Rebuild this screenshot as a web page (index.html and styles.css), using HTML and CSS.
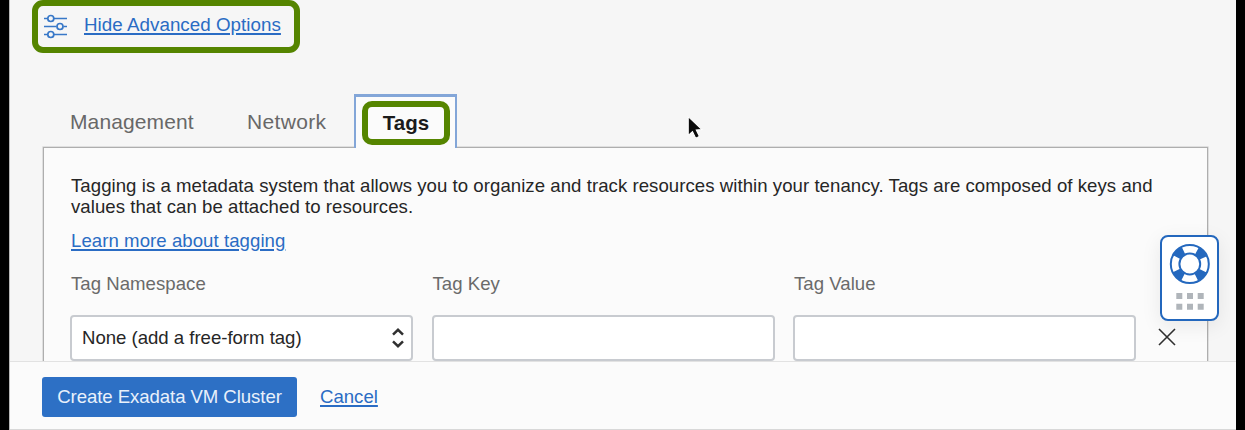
FILE: index.html
```html
<!DOCTYPE html>
<html lang="en">
<head>
<meta charset="utf-8">
<title>Create Exadata VM Cluster</title>
<link rel="stylesheet" href="styles.css">
</head>
<body>
<div class="window">
  <main class="content">
    <div class="advanced">
      <svg class="sliders" width="24" height="26" viewBox="0 0 24 26" fill="none" stroke="#3878c8" stroke-width="1.7">
        <path d="M0 5.5h3.6M10 5.5h13M0 13.5h12.5M19.5 13.5h3.5M0 21.5h3.6M10 21.5h13"/>
        <circle cx="6.8" cy="5.5" r="3"/><circle cx="16" cy="13.5" r="3"/><circle cx="6.8" cy="21.5" r="3"/>
      </svg>
      <a class="link advanced-link" href="#">Hide Advanced Options</a>
    </div>
    <nav class="tabs">
      <span class="tab management">Management</span>
      <span class="tab network">Network</span>
      <div class="tab-active"><span class="tab-mark">Tags</span></div>
    </nav>
    <section class="panel">
      <p class="intro"><span class="line line-one">Tagging is a metadata system that allows you to organize and track resources within your tenancy. Tags are composed of keys and</span> <span class="line line-two">values that can be attached to resources.</span></p>
      <a class="link learn" href="#">Learn more about tagging</a>
      <div class="fields">
        <div class="field">
          <span class="label label-ns">Tag Namespace</span>
          <div class="control"><span class="value">None (add a free-form tag)</span>
            <svg width="14" height="22" viewBox="0 0 14 22" fill="none" stroke="#303030" stroke-width="2.5"><path d="M2 7.6l5-4.8 5 4.8M2 14.4l5 4.8 5-4.8"/></svg>
          </div>
        </div>
        <div class="field"><span class="label">Tag Key</span><div class="control"></div></div>
        <div class="field"><span class="label">Tag Value</span><div class="control"></div></div>
        <svg class="remove" width="18" height="18" viewBox="0 0 18 18" fill="none" stroke="#303030" stroke-width="1.6"><path d="M1 1l16 16M17 1L1 17"/></svg>
      </div>
    </section>
  </main>
  <footer class="footer">
    <div class="primary"><span>Create Exadata VM Cluster</span></div>
    <a class="link cancel" href="#">Cancel</a>
  </footer>
</div>
<div class="help">
  <svg width="55" height="82" viewBox="0 0 55 82">
    <g fill="none" stroke="#2468be">
      <circle cx="27.8" cy="27" r="14.8" stroke-width="8" stroke-dasharray="9.4 13.85" stroke-dashoffset="-6.92"/>
      <circle cx="27.8" cy="27" r="19" stroke-width="2"/><circle cx="27.8" cy="27" r="10.4" stroke-width="2"/>
    </g>
    <path fill="#b0b5ba" d="M14.3 56h6v6h-6zM25 56h6v6h-6zM35.7 56h6v6h-6zM14.3 66.7h6v6h-6zM25 66.7h6v6h-6zM35.7 66.7h6v6h-6z"/>
  </svg>
</div>
<svg class="cursor" width="21" height="29" viewBox="0 0 20 28"><path fill="#0b0b0b" stroke="#fff" stroke-width="1" d="M3 2.5v18.2l4.1-3.7 3.1 6.3 3.5-1.7-3-6.1 5.5-.5z"/></svg>
</body>
</html>
```
FILE: styles.css
```css
* { box-sizing: border-box; }
body {
  margin: 0;
  width: 1245px;
  height: 430px;
  overflow: hidden;
  background: #000;
  font-family: "Liberation Sans", Arial, sans-serif;
  font-size: 18.6px;
  color: #262626;
}
.window {
  display: flex;
  flex-direction: column;
  width: 1227px;
  height: 430px;
  margin-left: 9px;
  border-left: 1px solid #b8b8b8;
  background: #f6f6f6;
}
.content { height: 361px; padding: 0 28px 0 33px; overflow: hidden; }
.link { color: #2a6cc4; text-decoration: underline; text-decoration-thickness: 1.5px; text-underline-offset: 2px; white-space: nowrap; }
.advanced {
  display: flex;
  align-items: flex-start;
  width: 268px;
  height: 53px;
  margin-left: -11px;
  padding: 7px 6px;
  border: 6px solid #558500;
  border-radius: 11px;
}
.sliders { flex: none; }
.advanced-link { margin: 1px 0 0 16px; font-size: 18.8px; line-height: 22px; letter-spacing: .03px; }
.tabs { display: flex; height: 95px; padding-top: 41px; }
.tab { padding-top: 16px; line-height: 24px; font-size: 21px; color: #686868; white-space: nowrap; }
.management { width: 177px; margin-left: 27px; letter-spacing: .12px; }
.network { width: 107px; letter-spacing: .35px; }
.tab-active {
  position: relative;
  z-index: 1;
  flex: none;
  width: 103px;
  height: 54px;
  padding: 5px 6px;
  border: 2px solid #83a6d8;
  border-top-width: 3px;
  border-bottom: 0;
  background: #fbfbfb;
}
.tab-mark {
  display: block;
  width: 88px;
  height: 44px;
  margin-top: -1px;
  border: 6px solid #558500;
  border-radius: 10px;
  color: #1b1b1b;
  font-size: 20.5px;
  font-weight: 700;
  line-height: 32px;
  text-align: center;
}
.panel {
  width: 1165px;
  height: 240px;
  margin-top: -1px;
  padding: 27px 26px;
  border: 1px solid #aeaeae;
  box-shadow: 0 0 0 .6px #cfcfcf;
  background: #fbfbfb;
}
.intro { margin: 0; padding-left: 1px; line-height: 21px; }
.line { display: block; white-space: nowrap; }
.line-one { letter-spacing: .05px; }
.line-two { letter-spacing: .05px; }
.learn { display: block; width: max-content; margin: 13px 0 0 1px; line-height: 21px; letter-spacing: .06px; }
.fields { display: flex; gap: 18.5px; margin-top: 22px; }
.field { width: 343px; }
.label { display: block; height: 42px; padding-left: 1px; line-height: 21px; letter-spacing: .03px; color: #6a6a6a; }
.control {
  display: flex;
  align-items: center;
  justify-content: space-between;
  height: 46px;
  padding: 0 6px 0 10px;
  border: 2px solid #c8cbd0;
  border-radius: 4px;
  background: #fff;
}
.value { letter-spacing: -.02px; white-space: nowrap; }
.remove { margin: 55px 0 0 3px; flex: none; }
.footer {
  display: flex;
  align-items: flex-start;
  height: 69px;
  padding: 15px 0 0 32px;
  border-top: 1px solid #e2e2e2;
  border-bottom: 1px solid #d8d8d8;
  background: #fbfbfb;
}
.primary {
  width: 255px;
  height: 40px;
  border-radius: 3px;
  background: #2d70c5;
  color: #e9f1fb;
  line-height: 40px;
  text-align: center;
  letter-spacing: -.07px;
}
.cancel { margin-left: 23px; line-height: 40px; letter-spacing: 0; }
.help {
  position: absolute;
  left: 1160px;
  top: 235px;
  width: 59px;
  height: 86px;
  border: 2px solid #2367bd;
  border-radius: 8px;
  background: #fff;
  box-shadow: 0 5px 20px rgba(0, 0, 0, .08);
}
.cursor { position: absolute; left: 685px; top: 114px; }
```
